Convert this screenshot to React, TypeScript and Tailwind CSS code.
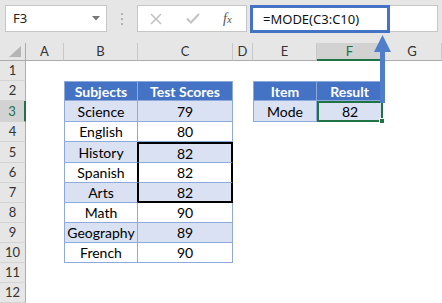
import React from "react";

type CellSpec = { w: string; text?: string; cls?: string; extra?: React.ReactNode };

const W = {
  A: "w-[38px]",
  B: "w-[74px]",
  C: "w-[95px]",
  D: "w-[20px]",
  E: "w-[64px]",
  F: "w-[66px]",
  G: "w-[59px]",
};

const HDR = "bg-[#4472c4] text-white font-bold border-r border-b border-[#8eaadb]";
const BAND = "bg-[#d9e1f2] text-black border-r border-b border-[#8eaadb]";
const PLAIN = "bg-white text-black border-r border-b border-[#8eaadb]";

function Cell({ w, text, cls, extra }: CellSpec) {
  return (
    <div className={`${w} shrink-0 h-full flex items-center justify-center pt-[1px] ${cls ?? "bg-white"}`}>
      {text}
      {extra}
    </div>
  );
}

function Row({ n, h, sel, cells }: { n: number; h: string; sel?: boolean; cells: CellSpec[] }) {
  return (
    <div className={`flex ${h}`}>
      <div
        className={`w-[26px] shrink-0 h-full flex items-center justify-center text-[13px] border-b border-b-[#d4d4d4] ${
          sel
            ? "bg-[#d2d2d2] text-[#217346] border-r-2 border-r-[#217346]"
            : "bg-[#e6e6e6] text-[#333] border-r border-r-[#ababab]"
        }`}
      >
        {n}
      </div>
      {cells.map((c, i) => (
        <Cell key={i} {...c} />
      ))}
    </div>
  );
}

const blank = (w: string): CellSpec => ({ w });

export default function App() {
  const rows: { n: number; h: string; sel?: boolean; cells: CellSpec[] }[] = [
    { n: 1, h: "h-[20px]", cells: [blank(W.A), blank(W.B), blank(W.C), blank(W.D), blank(W.E), blank(W.F), blank(W.G)] },
    {
      n: 2,
      h: "h-[20px]",
      cells: [
        blank(W.A),
        { w: W.B, text: "Subjects", cls: `${HDR} border-l border-t` },
        { w: W.C, text: "Test Scores", cls: `${HDR} border-t` },
        blank(W.D),
        { w: W.E, text: "Item", cls: `${HDR} border-l border-t` },
        { w: W.F, text: "Result", cls: `${HDR} border-t` },
        blank(W.G),
      ],
    },
    {
      n: 3,
      h: "h-[21px]",
      sel: true,
      cells: [
        blank(W.A),
        { w: W.B, text: "Science", cls: `${BAND} border-l` },
        { w: W.C, text: "79", cls: BAND },
        blank(W.D),
        { w: W.E, text: "Mode", cls: `${BAND} border-l` },
        {
          w: W.F,
          text: "82",
          cls: "bg-[#d9e1f2] text-black border-2 border-[#217346] relative",
          extra: (
            <span className="absolute right-[-4px] bottom-[-4px] w-[6px] h-[6px] bg-[#217346] border border-white" />
          ),
        },
        blank(W.G),
      ],
    },
    {
      n: 4,
      h: "h-[20px]",
      cells: [blank(W.A), { w: W.B, text: "English", cls: `${PLAIN} border-l` }, { w: W.C, text: "80", cls: PLAIN }, blank(W.D), blank(W.E), blank(W.F), blank(W.G)],
    },
    {
      n: 5,
      h: "h-[21px]",
      cells: [
        blank(W.A),
        { w: W.B, text: "History", cls: `${BAND} border-l border-r-black` },
        { w: W.C, text: "82", cls: `${BAND} border-l border-l-black border-t-2 border-t-black border-r-2 border-r-black` },
        blank(W.D),
        blank(W.E),
        blank(W.F),
        blank(W.G),
      ],
    },
    {
      n: 6,
      h: "h-[20px]",
      cells: [
        blank(W.A),
        { w: W.B, text: "Spanish", cls: `${PLAIN} border-l border-r-black` },
        { w: W.C, text: "82", cls: `${PLAIN} border-l border-l-black border-r-2 border-r-black` },
        blank(W.D),
        blank(W.E),
        blank(W.F),
        blank(W.G),
      ],
    },
    {
      n: 7,
      h: "h-[20px]",
      cells: [
        blank(W.A),
        { w: W.B, text: "Arts", cls: `${BAND} border-l border-r-black` },
        { w: W.C, text: "82", cls: `${BAND} border-l border-l-black border-r-2 border-r-black border-b-2 border-b-black` },
        blank(W.D),
        blank(W.E),
        blank(W.F),
        blank(W.G),
      ],
    },
    {
      n: 8,
      h: "h-[20px]",
      cells: [blank(W.A), { w: W.B, text: "Math", cls: `${PLAIN} border-l` }, { w: W.C, text: "90", cls: PLAIN }, blank(W.D), blank(W.E), blank(W.F), blank(W.G)],
    },
    {
      n: 9,
      h: "h-[20px]",
      cells: [blank(W.A), { w: W.B, text: "Geography", cls: `${BAND} border-l` }, { w: W.C, text: "89", cls: BAND }, blank(W.D), blank(W.E), blank(W.F), blank(W.G)],
    },
    {
      n: 10,
      h: "h-[20px]",
      cells: [blank(W.A), { w: W.B, text: "French", cls: `${PLAIN} border-l` }, { w: W.C, text: "90", cls: PLAIN }, blank(W.D), blank(W.E), blank(W.F), blank(W.G)],
    },
    { n: 11, h: "h-[20px]", cells: [blank(W.A), blank(W.B), blank(W.C), blank(W.D), blank(W.E), blank(W.F), blank(W.G)] },
    { n: 12, h: "h-[20px]", cells: [blank(W.A), blank(W.B), blank(W.C), blank(W.D), blank(W.E), blank(W.F), blank(W.G)] },
  ];

  const colHdr = "shrink-0 h-full flex items-center justify-center border-r border-r-[#c8c8c8] border-b border-b-[#ababab] bg-[#e6e6e6] text-[#333]";

  return (
    <div className="relative w-[442px] h-[303px] overflow-hidden bg-white font-['Lato',sans-serif] text-[14px] leading-none">
      {/* Formula bar */}
      <div className="h-[43px] bg-[#e6e6e6] flex items-start pt-[5px]">
        <div className="ml-[5px] w-[102px] h-[27px] bg-white border border-[#c6c6c6] flex items-center justify-between pl-[7px] pr-[6px] font-['Noto_Sans',sans-serif] text-[13px] text-[#222]">
          <span>F3</span>
          <svg width="8" height="5" viewBox="0 0 8 5">
            <path d="M0 0 L8 0 L4 4.5 Z" fill="#777" />
          </svg>
        </div>
        <div className="ml-[14px] mt-[8px] flex flex-col gap-[3px]">
          <span className="w-[2px] h-[2px] bg-[#b3b3b3]" />
          <span className="w-[2px] h-[2px] bg-[#b3b3b3]" />
          <span className="w-[2px] h-[2px] bg-[#b3b3b3]" />
        </div>
        <div className="ml-[14px] w-[110px] h-[27px] bg-white border border-[#c6c6c6] flex items-center">
          <svg className="ml-[12px]" width="12" height="12" viewBox="0 0 12 12">
            <path d="M1 1 L11 11 M11 1 L1 11" stroke="#c2c2c2" strokeWidth="1.6" />
          </svg>
          <svg className="ml-[24px]" width="14" height="11" viewBox="0 0 14 11">
            <path d="M1 5.5 L5 9.5 L13 1" stroke="#c2c2c2" strokeWidth="2" fill="none" />
          </svg>
          <span className="ml-[23px] font-['Liberation_Serif',serif] italic text-[14px] text-[#555]">
            f<span className="text-[11px]">x</span>
          </span>
        </div>
        <div className="ml-[3px] flex">
          <div className="w-[140px] h-[28px] bg-white border-[3px] border-[#4472c4] flex items-center pl-[10px] font-['Noto_Sans',sans-serif] text-[13px] text-[#111]">
            =MODE(C3:C10)
          </div>
          <div className="w-[48px] h-[27px] bg-white border-y border-r border-[#c6c6c6]" />
        </div>
      </div>

      {/* Column headers */}
      <div className="flex h-[18px] text-[13px]">
        <div className="w-[26px] shrink-0 h-full flex items-end justify-end pr-[4px] pb-[3px] border-r border-r-[#ababab] border-b border-b-[#ababab] bg-[#e6e6e6]">
          <svg width="12" height="11" viewBox="0 0 12 11">
            <path d="M12 0 L12 11 L0 11 Z" fill="#b5b5b5" />
          </svg>
        </div>
        <div className={`${W.A} ${colHdr}`}>A</div>
        <div className={`${W.B} ${colHdr}`}>B</div>
        <div className={`${W.C} ${colHdr}`}>C</div>
        <div className={`${W.D} ${colHdr}`}>D</div>
        <div className={`${W.E} ${colHdr}`}>E</div>
        <div className={`${W.F} shrink-0 h-full flex items-center justify-center border-r border-r-[#c8c8c8] border-b-2 border-b-[#217346] bg-[#d2d2d2] text-[#217346]`}>
          F
        </div>
        <div className={`${W.G} ${colHdr}`}>G</div>
      </div>

      {/* Grid rows */}
      <div className="flex flex-col">
        {rows.map((r) => (
          <Row key={r.n} n={r.n} h={r.h} sel={r.sel} cells={r.cells} />
        ))}
      </div>

      {/* Annotation arrow */}
      <svg className="absolute left-0 top-0 pointer-events-none" width="442" height="303" viewBox="0 0 442 303">
        <rect x="380" y="50" width="5" height="53" fill="#4f7fcb" />
        <path d="M374 52 L391 52 L382.5 35 Z" fill="#4f7fcb" />
      </svg>
    </div>
  );
}
